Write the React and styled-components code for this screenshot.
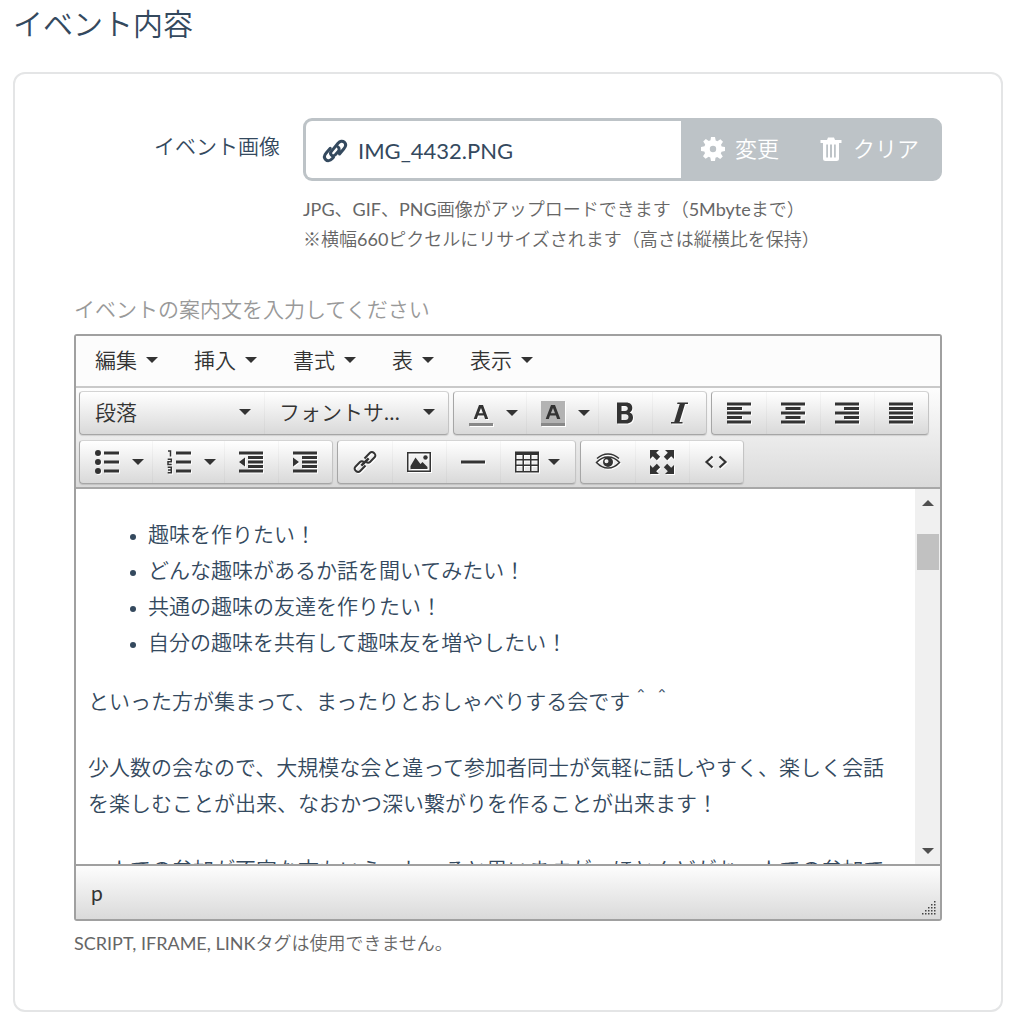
import {useState} from "react";
import styled, {createGlobalStyle, css} from "styled-components";

const GlobalStyle = createGlobalStyle`
  * {
    box-sizing: border-box;
  }

  body {
    margin: 0;
    background: #fff;
    color: #34495e;
    font-family: Lato, "Noto Sans CJK JP DemiLight", "Noto Sans CJK JP", sans-serif;
    font-size: 21px;
    line-height: 36px;
  }

  button, input, select {
    margin: 0;
    padding: 0;
    border: 0;
    background: none;
    color: inherit;
    font: inherit;
  }
`

const Page = styled.main`
  padding: 0 15px 12px 13px;
`

const Title = styled.h1`
  margin: 0 0 26px;
  font-size: 30px;
  font-weight: 400;
  line-height: 46px;
`

const Panel = styled.section`
  padding: 44px 59px 52px;
  border: 2px solid #e4e5e6;
  border-radius: 12px;
`

const FormRow = styled.div`
  display: grid;
  grid-template-columns: 206px 1fr;
  column-gap: 23px;
  margin-bottom: 37px;
`

const FieldLabel = styled.label`
  padding-top: 10px;
  text-align: right;
`

const FileGroup = styled.div`
  display: flex;
  height: 63px;
  margin-bottom: 13px;
  border: 3px solid #bdc3c7;
  border-radius: 9px;
  background: #bdc3c7;
`

const FileName = styled.div`
  flex: 1;
  min-width: 0;
  display: flex;
  align-items: center;
  gap: 11px;
  padding: 2px 17px 0;
  border-radius: 6px 0 0 6px;
  background: #fff;
`

const FileInput = styled.input`
  flex: 1;
  min-width: 0;
  outline: none;
  font-size: 22px;
`

const FileButton = styled.button`
  display: flex;
  align-items: center;
  gap: 10px;
  padding: 0 20px 2px;
  color: #fff;
  font-size: 22px;
  cursor: pointer;
`

const HelpText = styled.p`
  margin: 0;
  color: #666;
  font-size: 18px;
  line-height: 30px;
`

const EditorNote = styled(HelpText)`
  margin-top: 7px;
`

const EditorCaption = styled.p`
  margin: 0 0 7px;
  color: #999;
`

const Editor = styled.div`
  border: 2px solid #a0a0a0;
  border-radius: 3px;
  color: #333;
`

const MenuBar = styled.div`
  display: flex;
  gap: 6px;
  height: 52px;
  padding: 0 4px 2px;
  border-bottom: 2px solid #c9c9c9;
  background: #fcfcfc;
`

const MenuButton = styled.button`
  display: flex;
  align-items: center;
  gap: 9px;
  padding: 0 15px;
`

const Caret = styled.span`
  flex: none;
  border: 6px solid transparent;
  border-top-color: #333;
  border-bottom-width: 0;
`

const Toolbar = styled.div`
  display: flex;
  flex-wrap: wrap;
  gap: 5px 4px;
  padding: 3px;
  border-bottom: 2px solid #a8a8a8;
  background: linear-gradient(#fdfdfd, #dadada);
`

const ButtonGroup = styled.div`
  display: flex;
  height: 44px;
  border: 1px solid;
  border-color: #d4d4d4 #c4c4c4 #a6a6a6 #a6a6a6;
  border-radius: 4px;
  background: linear-gradient(#fff, #d9d9d9);
  box-shadow: 0 1px 1px rgba(0, 0, 0, 0.12);
`

const separator = css`
  & + & {
    box-shadow: inset 1px 0 rgba(0, 0, 0, 0.03);
  }
`

const padding = {
    plain: '0 15px 1px',
    split: '0 8px 1px 15px',
    menu: '0 15px 1px',
}

const ToolButton = styled.button`
  display: flex;
  align-items: center;
  gap: ${p => p.$kind === 'menu' ? 9 : 13}px;
  padding: ${p => padding[p.$kind]};
  cursor: pointer;
  ${separator}

  svg {
    filter: drop-shadow(1px 1px 0 #fff);
  }
`

const ListBox = styled.label`
  display: flex;
  align-items: center;
  gap: 12px;
  width: 184px;
  padding: 0 13px 2px 15px;
  ${separator}
`

const ListSelect = styled.select`
  flex: 1;
  min-width: 0;
  appearance: none;
  outline: none;
  overflow: hidden;
  text-overflow: ellipsis;
  white-space: nowrap;
`

const EditArea = styled.div`
  display: flex;
  height: 377px;
  border-bottom: 2px solid #a0a0a0;
  background: #fff;
`

const Document = styled.div`
  flex: 1;
  min-width: 0;
  overflow: hidden;
  padding: 27px 12px 0;
  color: #34495e;
  outline: none;

  ul {
    margin: 0 0 23px;
    padding-left: 60px;
  }

  li::marker {
    font-size: 17px;
  }

  p {
    margin: 0 0 30px;
  }
`

const ScrollBar = styled.div`
  display: flex;
  flex-direction: column;
  align-items: center;
  width: 25px;
  background: #f0f0f0;
`

const ScrollButton = styled.button`
  display: grid;
  place-items: center;
  width: 100%;
  height: 27px;
`

const ScrollTrack = styled.div`
  flex: 1;
  width: 22px;
  padding-top: 18px;
`

const ScrollThumb = styled.div`
  height: 36px;
  background: #c1c1c1;
`

const StatusBar = styled.div`
  display: flex;
  align-items: center;
  justify-content: space-between;
  height: 53px;
  padding: 0 4px 0 15px;
  background: linear-gradient(#fdfdfd, #dadada);
`

const Grip = styled.svg`
  align-self: flex-end;
  margin-bottom: 4px;
`

const icons = {
    ul: <>
        <circle cx="3" cy="3" r="3"/><circle cx="3" cy="12" r="3"/><circle cx="3" cy="21" r="3"/>
        <path d="M9 1.5h15v3H9zM9 10.500h15v3H9zM9 19.500h15v3H9z"/>
    </>,
    ol: <>
        <path d="M9 1.500h15v3H9zM9 10.500h15v3H9zM9 19.500h15v3H9z"/>
        <path d="M1 1h2.500v5.500M.7 9.200h3.600v2.600H1v2.600h3.700M.7 17.200h3.600v5.600H.7M1 20h3" fill="none" stroke="currentColor" strokeWidth="1.500"/>
    </>,
    outdent: <path d="M0 1.500h24v3H0zM9 6h15v3H9zM9 10.500h15v3H9zM9 15h15v3H9zM0 19.500h24v3H0zM6 7.500v9L0 12z"/>,
    indent: <path d="M0 1.500h24v3H0zM9 6h15v3H9zM9 10.500h15v3H9zM9 15h15v3H9zM0 19.500h24v3H0zM0 7.500v9L6 12z"/>,
    left: <path d="M0 1.500h24v3H0zM0 6h15v3H0zM0 10.500h24v3H0zM0 15h15v3H0zM0 19.500h24v3H0z"/>,
    center: <path d="M0 1.500h24v3H0zM4.500 6h15v3h-15zM0 10.500h24v3H0zM4.500 15h15v3h-15zM0 19.500h24v3H0z"/>,
    right: <path d="M0 1.500h24v3H0zM9 6h15v3H9zM0 10.500h24v3H0zM9 15h15v3H9zM0 19.500h24v3H0z"/>,
    justify: <path d="M0 1.500h24v3H0zM0 6h24v3H0zM0 10.500h24v3H0zM0 15h24v3H0zM0 19.500h24v3H0z"/>,
    bold: <path fillRule="evenodd" d="M4 1.500h9c4 0 6.300 2.200 6.300 5.500 0 2.200-1 3.800-2.700 4.600 2.200.8 3.400 2.500 3.400 4.900 0 3.700-2.500 6-6.800 6H4zM8.500 5v5H12c1.800 0 2.800-.9 2.800-2.500S13.800 5 12 5zM8.500 13.300V19h4c1.900 0 3-1 3-2.900s-1.100-2.800-3-2.800z"/>,
    italic: <path d="M10.500 1.500H21V3h-3l-5.500 18h3v1.500H4V21h3.200l5.500-18h-2.600z"/>,
    link: <g fill="none" stroke="currentColor" strokeWidth="2">
        <path d="m11.500 8.500 5.500-5.800a2.600 2.600 0 0 1 3.700 0l.9.900a2.600 2.600 0 0 1 0 3.700L17 12a2.600 2.600 0 0 1-3.700 0"/>
        <path d="M12.500 15.500 7 21.300a2.600 2.600 0 0 1-3.700 0l-.9-.9a2.600 2.600 0 0 1 0-3.700L7 12a2.600 2.600 0 0 1 3.700 0"/>
        <path d="m8.300 15.700 7.400-7.400" strokeWidth="2.500"/>
    </g>,
    image: <>
        <path fillRule="evenodd" d="M0 2h24v20H0zM1.500 3.500v17h21v-17z"/>
        <circle cx="18.500" cy="7.500" r="2.200"/>
        <path d="M3.500 19v-3l5-8.500 5 6.500 2-2 5 5v2z"/>
    </>,
    hr: <path d="M0 10.500h24v3H0z"/>,
    table: <path fillRule="evenodd" d="M0 1.500h24v21H0zM1.500 5v4h6V5zM9 5v4h6V5zM16.500 5v4h6V5zM1.500 10.500v4h6v-4zM9 10.500v4h6v-4zM16.500 10.500v4h6v-4zM1.500 16v5h6v-5zM9 16v5h6v-5zM16.500 16v5h6v-5z"/>,
    eye: <>
        <path d="M.5 12.500Q5.500 7 12 7t11.500 5.500Q18.500 18 12 18T.5 12.500z" fill="none" stroke="currentColor" strokeWidth="1.500"/>
        <path d="M1 8.500Q6 4 12 4t11 4.500" fill="none" stroke="currentColor" strokeWidth="1.500"/>
        <path fillRule="evenodd" d="M12 7a5 5 0 1 1 0 10 5 5 0 0 1 0-10zm-1.500 2.200a2 2 0 1 0 0 4 2 2 0 0 0 0-4z"/>
    </>,
    fullscreen: <path d="M0 0h9L6.200 2.800l4 4-3.400 3.400-4-4L0 9zM24 0v9l-2.800-2.800-4 4-3.400-3.400 4-4L15 0zM0 24v-9l2.800 2.800 4-4 3.400 3.400-4 4L9 24zM24 24h-9l2.800-2.800-4-4 3.400-3.400 4 4L24 15z"/>,
    code: <path d="m8.500 6.500-6 5.500 6 5.500M15.500 6.500l6 5.500-6 5.500" fill="none" stroke="currentColor" strokeWidth="2.200"/>,
    forecolor: <>
        <path fillRule="evenodd" d="M10 4h4l5.300 14h-3.200l-1.200-3.500H9L7.800 18H4.700zm2 3-2.100 5.200H14z"/>
        <path fill="#888" d="M0 22h24v3H0z"/>
    </>,
    backcolor: <>
        <path fill="#b3b3b3" d="M0 0h24v22H0z"/>
        <path fillRule="evenodd" d="M10 4h4l5.300 14h-3.200l-1.200-3.500H9L7.800 18H4.700zm2 3-2.100 5.200H14z"/>
        <path fill="#888" d="M0 22h24v3H0z"/>
    </>,
    clip: <g fill="none" stroke="currentColor" strokeWidth="3" strokeLinecap="round">
        <path d="M15.200 8.200c1.400 1.200 1.200 3-.2 4.600l-2.700 3c-1.300 1.300-3 1.400-4 .3s-.9-2.700.3-4L15 4.200c2-2.200 4.500-2.700 6.300-1s1.600 4.300-.4 6.500L16.500 15"/>
        <path d="M7.300 9.300 3.200 14c-2 2.300-2.200 4.900-.5 6.600s4.400 1.300 6.400-.8l1.400-1.500"/>
    </g>,
    gear: <path fillRule="evenodd" d="M10 0h4l.7 3.500 1.700.7L19.400 2.200l2.600 2.600-2 3 .7 1.700L24 10v4l-3.500.7-.7 1.700 2 3-2.600 2.600-3-2-1.700.7L14 24h-4l-.7-3.500-1.700-.7-3 2L2 19.200l2-3-.7-1.700L0 14v-4l3.500-.7.7-1.700-2-3L4.800 2l3 2 1.700-.7zM12 8.800a3.200 3.200 0 1 0 0 6.400 3.200 3.200 0 0 0 0-6.400z"/>,
    trash: <>
        <path d="M1.500 3H8l1-2.500h6L16 3h6.500v3h-21z"/>
        <path fillRule="evenodd" d="M4 6h16v15.500a2.500 2.500 0 0 1-2.500 2.500h-11A2.500 2.500 0 0 1 4 21.500zM7.200 7.500v13h1.800v-13zM11 7.500v13h2v-13zM15 7.500v13h1.800v-13z"/>
    </>,
}

const Icon = ({name}) => (
    <svg width="24" height="24" viewBox="0 0 24 24" fill="currentColor" overflow="visible" aria-hidden="true">
        {icons[name]}
    </svg>
)

const menus = ['編集', '挿入', '書式', '表', '表示']

const buttonGroups = [
    [
        {icon: 'forecolor', label: 'テキストの色', kind: 'split'},
        {icon: 'backcolor', label: '背景色', kind: 'split'},
        {icon: 'bold', label: '太字'},
        {icon: 'italic', label: '斜体'},
    ],
    [
        {icon: 'left', label: '左寄せ'},
        {icon: 'center', label: '中央揃え'},
        {icon: 'right', label: '右寄せ'},
        {icon: 'justify', label: '両端揃え'},
    ],
    [
        {icon: 'ul', label: '箇条書き', kind: 'split'},
        {icon: 'ol', label: '番号付き箇条書き', kind: 'split'},
        {icon: 'outdent', label: 'インデントを減らす'},
        {icon: 'indent', label: 'インデントを増やす'},
    ],
    [
        {icon: 'link', label: 'リンクの挿入'},
        {icon: 'image', label: '画像の挿入'},
        {icon: 'hr', label: '水平罫線'},
        {icon: 'table', label: '表', kind: 'menu'},
    ],
    [
        {icon: 'eye', label: 'プレビュー'},
        {icon: 'fullscreen', label: '全画面表示'},
        {icon: 'code', label: 'ソースコード'},
    ],
]

const gripDots = [0, 1, 2, 3, 4].flatMap(row => (
    Array.from({length: row + 1}, (_, i) => ({x: 12 - i * 3, y: row * 3}))
))

export default function App() {
    const [fileName, setFileName] = useState('IMG_4432.PNG');
    return <>
        <GlobalStyle/>
        <Page>
            <Title>イベント内容</Title>
            <Panel>
                <FormRow>
                    <FieldLabel htmlFor="event-image">イベント画像</FieldLabel>
                    <div>
                        <FileGroup>
                            <FileName>
                                <Icon name="clip"/>
                                <FileInput id="event-image" value={fileName} readOnly/>
                            </FileName>
                            <FileButton type="button"><Icon name="gear"/>変更</FileButton>
                            <FileButton type="button" onClick={() => setFileName('')}>
                                <Icon name="trash"/>クリア
                            </FileButton>
                        </FileGroup>
                        <HelpText>
                            JPG、GIF、PNG画像がアップロードできます（5Mbyteまで）<br/>
                            ※横幅660ピクセルにリサイズされます（高さは縦横比を保持）
                        </HelpText>
                    </div>
                </FormRow>
                <EditorCaption>イベントの案内文を入力してください</EditorCaption>
                <Editor>
                    <MenuBar>
                        {menus.map(menu => (
                            <MenuButton type="button" key={menu}>{menu}<Caret/></MenuButton>
                        ))}
                    </MenuBar>
                    <Toolbar>
                        <ButtonGroup>
                            <ListBox>
                                <ListSelect aria-label="段落の書式">
                                    <option>段落</option>
                                </ListSelect>
                                <Caret/>
                            </ListBox>
                            <ListBox>
                                <ListSelect aria-label="フォントサイズ">
                                    <option>フォントサイズ</option>
                                </ListSelect>
                                <Caret/>
                            </ListBox>
                        </ButtonGroup>
                        {buttonGroups.map(group => (
                            <ButtonGroup key={group[0].icon}>
                                {group.map(({icon, label, kind = 'plain'}) => (
                                    <ToolButton type="button" key={icon} $kind={kind} aria-label={label}>
                                        <Icon name={icon}/>
                                        {kind !== 'plain' && <Caret/>}
                                    </ToolButton>
                                ))}
                            </ButtonGroup>
                        ))}
                    </Toolbar>
                    <EditArea>
                        <Document
                            contentEditable
                            suppressContentEditableWarning
                            spellCheck={false}
                            role="textbox"
                            aria-label="イベントの案内文"
                        >
                            <ul>
                                <li>趣味を作りたい！</li>
                                <li>どんな趣味があるか話を聞いてみたい！</li>
                                <li>共通の趣味の友達を作りたい！</li>
                                <li>自分の趣味を共有して趣味友を増やしたい！</li>
                            </ul>
                            <p>といった方が集まって、まったりとおしゃべりする会です＾＾</p>
                            <p>少人数の会なので、大規模な会と違って参加者同士が気軽に話しやすく、楽しく会話を楽しむことが出来、なおかつ深い繋がりを作ることが出来ます！</p>
                            <p>一人での参加が不安な方もいらっしゃると思いますが、ほとんどがお一人での参加で</p>
                        </Document>
                        <ScrollBar>
                            <ScrollButton type="button" aria-label="上へ">
                                <svg width="12" height="6"><path d="M6 0l6 6H0z" fill="#505050"/></svg>
                            </ScrollButton>
                            <ScrollTrack><ScrollThumb/></ScrollTrack>
                            <ScrollButton type="button" aria-label="下へ">
                                <svg width="12" height="6"><path d="M0 0h12L6 6z" fill="#505050"/></svg>
                            </ScrollButton>
                        </ScrollBar>
                    </EditArea>
                    <StatusBar>
                        <span>p</span>
                        <Grip width="14" height="14" aria-hidden="true">
                            {gripDots.map(({x, y}) => (
                                <rect key={`${x}-${y}`} x={x} y={y} width="1.500" height="1.500" fill="#444"/>
                            ))}
                        </Grip>
                    </StatusBar>
                </Editor>
                <EditorNote>SCRIPT, IFRAME, LINKタグは使用できません。</EditorNote>
            </Panel>
        </Page>
    </>
}
